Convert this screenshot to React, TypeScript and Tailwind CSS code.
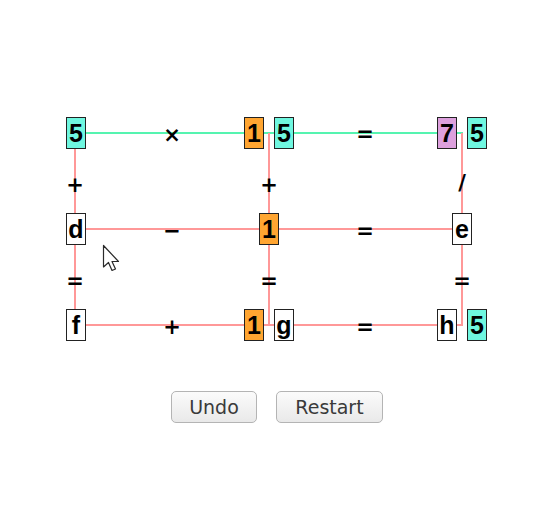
import React from 'react';

type Cell = { label: string; pos: string; bg: string };

const cells: Cell[] = [
  // row 1
  { label: '5', pos: 'left-[66px] top-[117px]', bg: 'bg-[#6ff7e0]' },
  { label: '1', pos: 'left-[244px] top-[117px]', bg: 'bg-[#ffa531]' },
  { label: '5', pos: 'left-[274px] top-[117px]', bg: 'bg-[#6ff7e0]' },
  { label: '7', pos: 'left-[437px] top-[117px]', bg: 'bg-[#dda0dd]' },
  { label: '5', pos: 'left-[467px] top-[117px]', bg: 'bg-[#6ff7e0]' },
  // row 2
  { label: 'd', pos: 'left-[66px] top-[213px]', bg: 'bg-white' },
  { label: '1', pos: 'left-[259px] top-[213px]', bg: 'bg-[#ffa531]' },
  { label: 'e', pos: 'left-[452px] top-[213px]', bg: 'bg-white' },
  // row 3
  { label: 'f', pos: 'left-[66px] top-[309px]', bg: 'bg-white' },
  { label: '1', pos: 'left-[244px] top-[309px]', bg: 'bg-[#ffa531]' },
  { label: 'g', pos: 'left-[274px] top-[309px]', bg: 'bg-white' },
  { label: 'h', pos: 'left-[437px] top-[309px]', bg: 'bg-white' },
  { label: '5', pos: 'left-[467px] top-[309px]', bg: 'bg-[#6ff7e0]' },
];

// operators, centred on a 24x24 box
const ops: { sym: string; pos: string }[] = [
  { sym: '×', pos: 'left-[160px] top-[123px]' },
  { sym: '=', pos: 'left-[353px] top-[122px]' },
  { sym: '−', pos: 'left-[160px] top-[219px]' },
  { sym: '=', pos: 'left-[353px] top-[219px]' },
  { sym: '+', pos: 'left-[160px] top-[315px]' },
  { sym: '=', pos: 'left-[353px] top-[315px]' },
  { sym: '+', pos: 'left-[63px] top-[173px]' },
  { sym: '+', pos: 'left-[257px] top-[173px]' },
  { sym: '/', pos: 'left-[450px] top-[171px]' },
  { sym: '=', pos: 'left-[63px] top-[269px]' },
  { sym: '=', pos: 'left-[257px] top-[269px]' },
  { sym: '=', pos: 'left-[450px] top-[269px]' },
];

function Cursor() {
  return (
    <svg className="absolute left-[102px] top-[244px]" width="20" height="30" viewBox="0 0 20 30">
      <path
        d="M1.5 1.5 L1.5 23 L6.5 18.5 L10 26.5 L13.5 25 L10 17.5 L16.5 17.5 Z"
        fill="#fff"
        stroke="#2a2a2a"
        strokeWidth="1.2"
        strokeLinejoin="round"
      />
    </svg>
  );
}

export default function App() {
  return (
    <div className="w-[543px] h-[511px] bg-white flex flex-col select-none">
      {/* puzzle board */}
      <div className="relative w-[543px] h-[370px]">
        {/* grid lines */}
        <div className="absolute left-[75px] top-[132px] w-[388px] h-[2px] bg-[#55f4b0]" />
        <div className="absolute left-[75px] top-[228px] w-[388px] h-[2px] bg-[#ff9898]" />
        <div className="absolute left-[75px] top-[324px] w-[388px] h-[2px] bg-[#ff9898]" />
        <div className="absolute left-[74px] top-[133px] w-[2px] h-[192px] bg-[#ff9898]" />
        <div className="absolute left-[268px] top-[133px] w-[2px] h-[192px] bg-[#ff9898]" />
        <div className="absolute left-[461px] top-[133px] w-[2px] h-[192px] bg-[#ff9898]" />

        {ops.map((o, i) => (
          <div
            key={i}
            className={`absolute ${o.pos} w-[24px] h-[24px] flex items-center justify-center font-['DejaVu_Sans',sans-serif] font-bold text-[21px] leading-none text-black`}
          >
            {o.sym}
          </div>
        ))}

        {cells.map((c, i) => (
          <div
            key={i}
            className={`absolute ${c.pos} ${c.bg} w-[20px] h-[32px] border border-[#222] flex items-center justify-center font-['Liberation_Sans',sans-serif] font-bold text-[25px] leading-none text-black`}
          >
            {c.label}
          </div>
        ))}

        <Cursor />
      </div>

      {/* controls */}
      <div className="flex gap-[19px] pl-[171px] mt-[21px]">
        <button className="w-[86px] h-[32px] rounded-[5px] border border-[#b4b4b4] bg-gradient-to-b from-[#fbfbfb] to-[#e9e9e9] text-[#3a3a3a] text-[19px] font-['DejaVu_Sans',sans-serif] shadow-[0_1px_0_#fff]">
          Undo
        </button>
        <button className="w-[107px] h-[32px] rounded-[5px] border border-[#b4b4b4] bg-gradient-to-b from-[#fbfbfb] to-[#e9e9e9] text-[#3a3a3a] text-[19px] font-['DejaVu_Sans',sans-serif] shadow-[0_1px_0_#fff]">
          Restart
        </button>
      </div>
    </div>
  );
}
